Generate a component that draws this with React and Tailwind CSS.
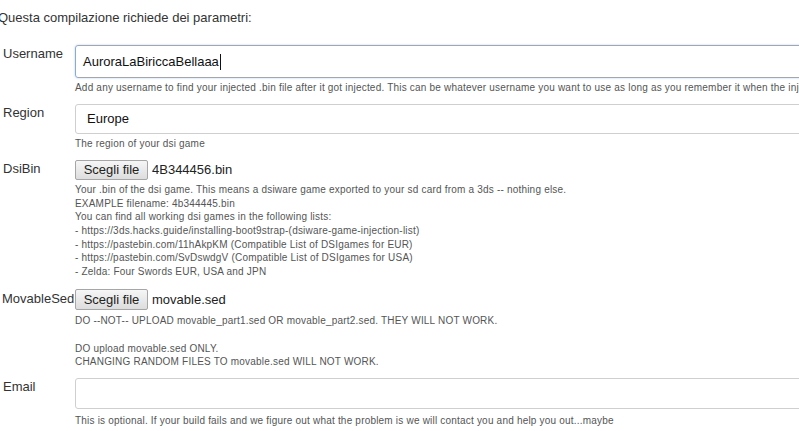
import React from "react";

const Help = ({ children, className = "" }) => (
  <div className={`text-[10px] leading-[13.6px] text-[#555] tracking-[0.2px] ${className}`}>{children}</div>
);

const FileButton = ({ name, h = "h-[20px]" }) => (
  <div className="flex items-center gap-[4px]">
    <div className={`${h} w-[73px] flex items-center justify-center rounded-[2px] border border-[#a6a6a6] bg-gradient-to-b from-[#f6f6f6] to-[#dddddd] text-[13px] text-[#222]`}>
      Scegli file
    </div>
    <span className="text-[13px] text-[#222]">{name}</span>
  </div>
);

export default function App() {
  return (
    <div className="w-[799px] h-[431px] overflow-hidden bg-white text-[#333]" style={{ fontFamily: '"Liberation Sans", Arial, sans-serif' }}>
      <div className="ml-[-2px] pt-[10px] text-[13px] leading-4">Questa compilazione richiede dei parametri:</div>

      <div className="w-[1000px] pl-[3px] mt-[19px] flex flex-col">
        {/* Username */}
        <div className="flex">
          <div className="w-[72px] text-[13px] leading-4 pt-[1px]">Username</div>
          <div className="flex-1">
            <div className="h-[33px] flex items-center px-[7px] rounded-[3px] border border-[#86acdc] shadow-[0_0_2px_rgba(102,150,220,0.5)] text-[13px] text-[#111]">
              AuroraLaBiriccaBellaaa<span className="inline-block w-px h-[16px] bg-[#111] ml-[1px]" />
            </div>
            <Help className="mt-[3px]">
              Add any username to find your injected .bin file after it got injected. This can be whatever username you want to use as long as you remember it when the injection is done.
            </Help>
          </div>
        </div>

        {/* Region */}
        <div className="flex mt-[9px]">
          <div className="w-[72px] text-[13px] leading-4 pt-[1px]">Region</div>
          <div className="flex-1">
            <div className="h-[30px] flex items-center px-[11px] rounded-[3px] border border-[#cfcfcf] text-[13px] text-[#111]">
              Europe
            </div>
            <Help className="mt-[3px]">The region of your dsi game</Help>
          </div>
        </div>

        {/* DsiBin */}
        <div className="flex mt-[10px]">
          <div className="w-[72px] text-[13px] leading-4 pt-[1px]">DsiBin</div>
          <div className="flex-1">
            <FileButton name="4B344456.bin" />
            <Help className="mt-[3px]">
              <div>Your .bin of the dsi game. This means a dsiware game exported to your sd card from a 3ds -- nothing else.</div>
              <div>EXAMPLE filename: 4b344445.bin</div>
              <div>You can find all working dsi games in the following lists:</div>
              <div>- https://3ds.hacks.guide/installing-boot9strap-(dsiware-game-injection-list)</div>
              <div>- https://pastebin.com/11hAkpKM (Compatible List of DSIgames for EUR)</div>
              <div>- https://pastebin.com/SvDswdgV (Compatible List of DSIgames for USA)</div>
              <div>- Zelda: Four Swords EUR, USA and JPN</div>
            </Help>
          </div>
        </div>

        {/* MovableSed */}
        <div className="flex mt-[11px] ml-[-1px]">
          <div className="w-[73px] text-[13px] leading-4 pt-[2px]">MovableSed</div>
          <div className="flex-1">
            <FileButton name="movable.sed" h="h-[21px]" />
            <Help className="mt-[4px]">
              <div>DO --NOT-- UPLOAD movable_part1.sed OR movable_part2.sed. THEY WILL NOT WORK.</div>
              <div className="h-[13.6px]" />
              <div>DO upload movable.sed ONLY.</div>
              <div>CHANGING RANDOM FILES TO movable.sed WILL NOT WORK.</div>
            </Help>
          </div>
        </div>

        {/* Email */}
        <div className="flex mt-[9px]">
          <div className="w-[72px] text-[13px] leading-4 pt-[1px]">Email</div>
          <div className="flex-1">
            <div className="h-[31px] rounded-[3px] border border-[#cfcfcf]" />
            <Help className="mt-[5px]">
              This is optional. If your build fails and we figure out what the problem is we will contact you and help you out...maybe
            </Help>
          </div>
        </div>
      </div>
    </div>
  );
}
